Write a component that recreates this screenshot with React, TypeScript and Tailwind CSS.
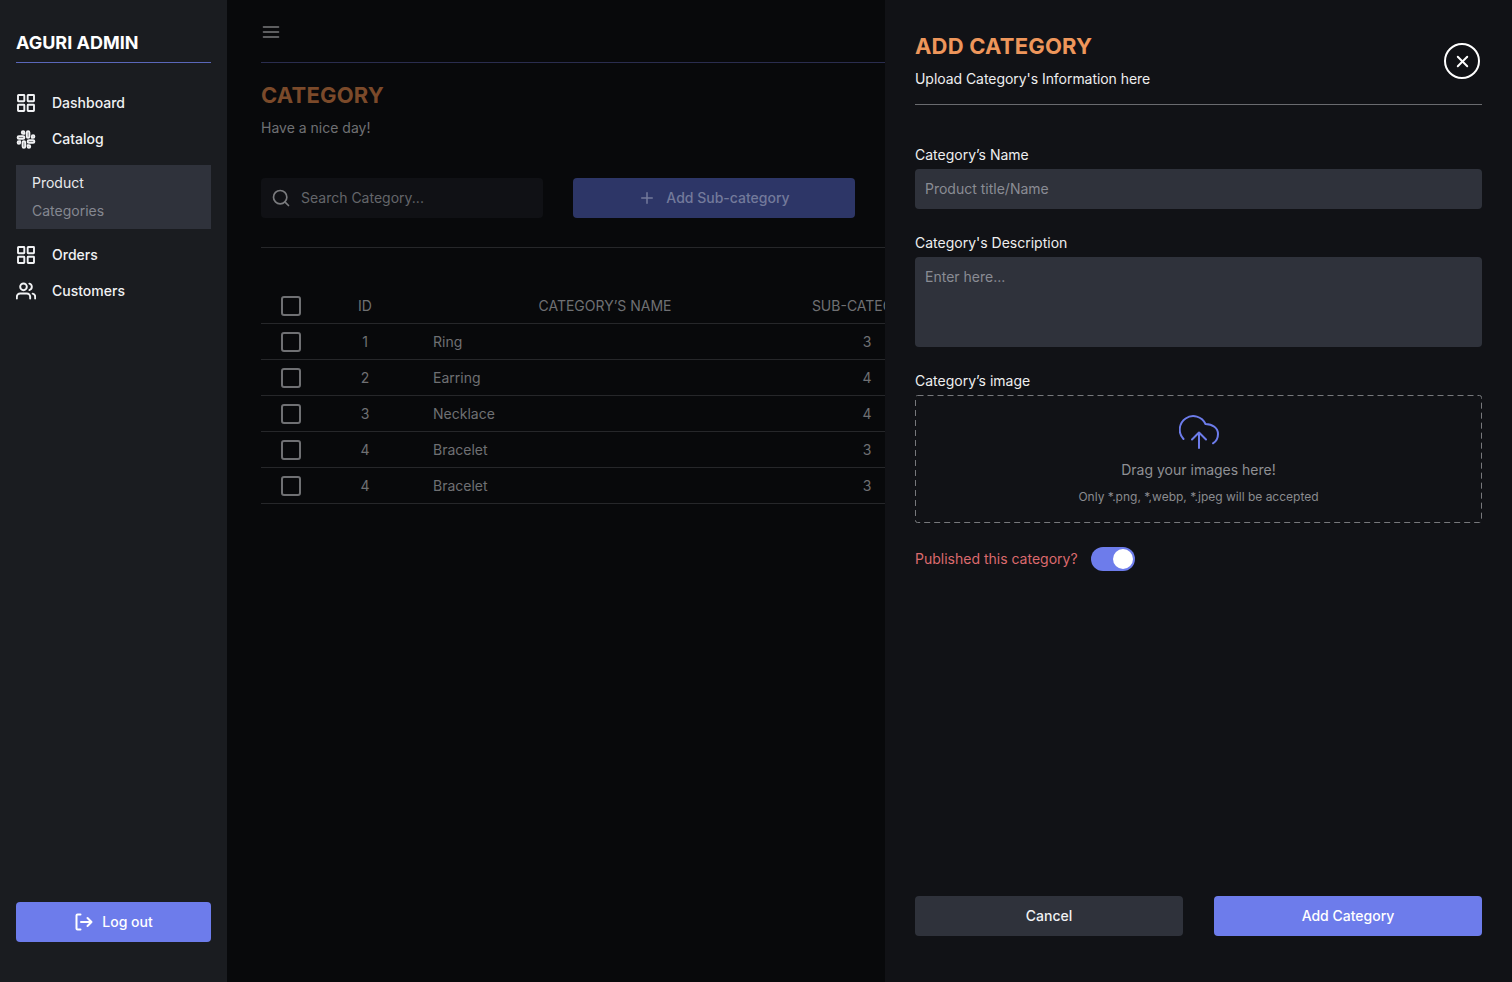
import { FiMenu, FiPlus, FiSearch, FiSlack, FiUsers, FiX } from "react-icons/fi";

const rows = [
  { id: 1, name: "Ring", count: 3 },
  { id: 2, name: "Earring", count: 4 },
  { id: 3, name: "Necklace", count: 4 },
  { id: 4, name: "Bracelet", count: 3 },
  { id: 4, name: "Bracelet", count: 3 },
];

function GridIcon() {
  return (
    <svg width="20" height="20" viewBox="0 0 20 20" fill="none" stroke="currentColor" strokeWidth="1.9" className="shrink-0">
      <rect x="2" y="2" width="6.3" height="6.3" rx="0.5" />
      <rect x="11.7" y="2" width="6.3" height="6.3" rx="0.5" />
      <rect x="2" y="11.7" width="6.3" height="6.3" rx="0.5" />
      <rect x="11.7" y="11.7" width="6.3" height="6.3" rx="0.5" />
    </svg>
  );
}

function LogoutIcon() {
  return (
    <svg width="20" height="20" viewBox="0 0 20 20" fill="none" stroke="currentColor" strokeWidth="2" strokeLinecap="round" strokeLinejoin="round" className="shrink-0">
      <path d="M6.5 2.5H3.5a1 1 0 0 0-1 1v13a1 1 0 0 0 1 1h3" />
      <path d="M7 10h10.5M13.5 6l4 4-4 4" />
    </svg>
  );
}

function UploadIcon() {
  return (
    <svg width="40" height="34" viewBox="0 0 40 34" fill="none" stroke="currentColor" strokeWidth="2" strokeLinecap="round" strokeLinejoin="round" className="relative shrink-0 text-[#6d7ceb]">
      <path d="M4.5 24A13.5 13.5 0 1 1 26.5 9C33.5 9 39 13 39 19C39 23 37 26.5 34 28.3" />
      <path d="M20 33V17.5M13 24.5l7-7 7 7" />
    </svg>
  );
}

function NavItem({ icon, label }: { icon: React.ReactNode; label: string }) {
  return (
    <div className="flex h-9 items-center gap-[16px] text-sm font-medium text-[#f0f1f3]">
      <span className="flex w-5 justify-center">{icon}</span>
      {label}
    </div>
  );
}

function Checkbox() {
  return <div className="h-5 w-5 rounded-[3px] border-2 border-[#6f7073]" />;
}

export default function App() {
  return (
    <div className="relative flex h-[982px] w-[1512px] overflow-hidden bg-[#08090b] font-['Inter',sans-serif]">
      {/* Sidebar */}
      <aside className="flex w-[227px] shrink-0 flex-col bg-[#1a1c20] px-4 pb-10">
        <div className="mt-[32px] flex h-[31px] items-start border-b border-[#5a67ba] text-lg leading-[22px] font-bold text-white">
          AGURI ADMIN
        </div>
        <nav className="mt-[22px] flex flex-col">
          <NavItem icon={<GridIcon />} label="Dashboard" />
          <NavItem icon={<FiSlack size={21} strokeWidth={2.4} />} label="Catalog" />
          <div className="mt-2 mb-2 flex h-16 flex-col justify-center gap-[8px] bg-[#2f323b] pl-4 text-sm leading-5 font-normal">
            <span className="text-[#e9eaec]">Product</span>
            <span className="text-[#858891]">Categories</span>
          </div>
          <NavItem icon={<GridIcon />} label="Orders" />
          <NavItem icon={<FiUsers size={22} strokeWidth={2.3} />} label="Customers" />
        </nav>
        <button className="mt-auto flex h-10 items-center justify-center gap-2 rounded bg-[#6d7ceb] text-sm font-medium text-white">
          <LogoutIcon />
          Log out
        </button>
      </aside>

      {/* Page behind the drawer */}
      <main className="min-w-0 flex-1 px-[34px] text-[#6f7073]">
        <div className="flex h-[63px] items-center border-b border-[#2a2d4f] pt-[1px]">
          <FiMenu size={20} className="text-[#7a7b7e]" />
        </div>
        <h1 className="mt-[19px] text-[22px] leading-[26px] font-bold tracking-[0.2px] text-[#7b4a2a]">CATEGORY</h1>
        <p className="mt-[10px] text-sm leading-5 font-normal">Have a nice day!</p>
        <div className="mt-[40px] flex h-10 gap-[30px]">
          <div className="flex w-[282px] items-center gap-[10px] rounded bg-[#101115] pl-[10px] text-sm text-[#64666a]">
            <FiSearch size={20} className="text-[#7a7b7e]" />
            Search Category...
          </div>
          <button className="flex w-[282px] items-center justify-center gap-[10px] rounded bg-[#2d3667] text-sm font-medium text-[#737a9b]">
            <FiPlus size={18} />
            Add Sub-category
          </button>
        </div>
        <div className="mt-[29px] h-px bg-[#26272a]" />
        <table className="mt-10 w-[1217px] table-fixed border-collapse text-sm">
          <thead>
            <tr className="h-[35px] border-b border-[#26272a]">
              <th className="w-[60px] pt-[2px] font-normal">
                <div className="flex justify-center"><Checkbox /></div>
              </th>
              <th className="w-[88px] pt-[2px] text-center font-normal">ID</th>
              <th className="w-[392px] pt-[2px] text-center font-normal">CATEGORY’S NAME</th>
              <th className="w-[132px] pt-[2px] text-center font-normal whitespace-nowrap">SUB-CATEGORY</th>
              <th className="font-normal" />
            </tr>
          </thead>
          <tbody>
            {rows.map((row, i) => (
              <tr key={i} className="h-9 border-b border-[#26272a]">
                <td className="pt-[2px]">
                  <div className="flex justify-center"><Checkbox /></div>
                </td>
                <td className="pt-[2px] text-center">{row.id}</td>
                <td className="pt-[2px] pl-6">{row.name}</td>
                <td className="pt-[2px] text-center">{row.count}</td>
                <td />
              </tr>
            ))}
          </tbody>
        </table>
      </main>

      {/* Drawer */}
      <section className="absolute inset-y-0 right-0 flex w-[627px] flex-col bg-[#111216] px-[30px] pb-[46px] text-sm">
        <header className="flex h-[105px] items-start justify-between border-b border-[#6a6b6f] pt-[33px]">
          <div>
            <h2 className="text-[22px] leading-[26px] font-bold tracking-[0.2px] text-[#ee965b]">ADD CATEGORY</h2>
            <p className="mt-[10px] leading-5 tracking-[-0.05px] text-[#eeeeef]">Upload Category's Information here</p>
          </div>
          <button className="mt-[10px] mr-[2px] flex h-9 w-9 items-center justify-center rounded-full border-2 border-white text-white">
            <FiX size={19} strokeWidth={2.4} />
          </button>
        </header>
        <label className="mt-10 leading-5 text-[#eeeeef]">Category’s Name</label>
        <div className="mt-1 flex h-10 items-center rounded bg-[#2f323b] px-[10px] text-[#8a8c94]">Product title/Name</div>
        <label className="mt-6 leading-5 text-[#eeeeef]">Category's Description</label>
        <div className="mt-1 h-[90px] rounded bg-[#2f323b] px-[10px] pt-[10px] leading-5 text-[#8a8c94]">Enter here...</div>
        <label className="mt-6 leading-5 text-[#eeeeef]">Category’s image</label>
        <div className="relative mt-1 flex h-[128px] flex-col items-center pt-[20px]">
          <svg width="567" height="128" className="absolute inset-0 text-[#77787c]" fill="none" stroke="currentColor">
            <rect x="0.5" y="0.5" width="566" height="127" rx="2" strokeDasharray="6 4" />
          </svg>
          <UploadIcon />
          <p className="mt-[11px] leading-5 text-[#8f9094]">Drag your images here!</p>
          <p className="mt-[7px] text-xs leading-5 text-[#8a8b8f]">Only *.png, *,webp, *.jpeg will be accepted</p>
        </div>
        <div className="mt-6 flex items-center gap-[13px]">
          <span className="leading-5 text-[#dc6a6e]">Published this category?</span>
          <div className="flex h-6 w-11 items-center justify-end rounded-full bg-[#6d7ceb] pr-[2px]">
            <div className="h-5 w-5 rounded-full bg-white" />
          </div>
        </div>
        <footer className="mt-auto grid grid-cols-2 gap-[31px]">
          <button className="h-10 rounded bg-[#2f323b] font-medium text-[#f0f1f3]">Cancel</button>
          <button className="h-10 rounded bg-[#6d7ceb] font-medium text-white">Add Category</button>
        </footer>
      </section>
    </div>
  );
}
